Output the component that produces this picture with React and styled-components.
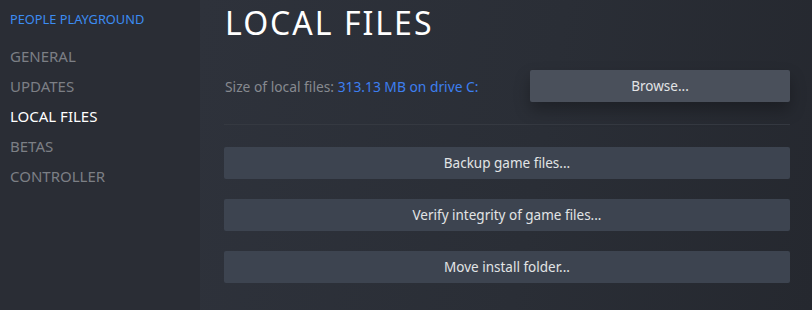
import React from 'react';
import styled, { createGlobalStyle } from 'styled-components';

const GlobalStyle = createGlobalStyle`
  html, body {
    margin: 0;
    padding: 0;
    background: #2a2d35;
  }
  body {
    font-family: "Noto Sans", "DejaVu Sans", sans-serif;
  }
`;

const Page = styled.div`
  display: flex;
  width: 812px;
  height: 310px;
  overflow: hidden;
`;

const Sidebar = styled.nav`
  width: 200px;
  flex-shrink: 0;
  background: #2a2d35;
  padding: 11px 0 0 10px;
  box-sizing: border-box;
`;

const GameTitle = styled.div`
  font-size: 12.8px;
  line-height: 16px;
  color: #3c8cf2;
  margin-bottom: 14px;
`;

const NavItem = styled.div`
  font-size: 15px;
  line-height: 30px;
  color: ${(p) => (p.$active ? '#ffffff' : '#7c7f85')};
  cursor: pointer;
`;

const Main = styled.main`
  flex: 1;
  padding: 0 22px 0 24px;
  background: linear-gradient(100deg, #2e323b 0%, #2a2e36 55%, #25282f 100%);
  display: flex;
  flex-direction: column;
`;

const Title = styled.h1`
  margin: 0 0 0 1px;
  font-size: 32px;
  font-weight: 400;
  line-height: 46px;
  letter-spacing: 2px;
  color: #ffffff;
  height: 46px;
`;

const SizeRow = styled.div`
  display: flex;
  align-items: center;
  justify-content: space-between;
  margin-top: 24px;
  padding-bottom: 22px;
  border-bottom: 1px solid #353941;
`;

const SizeText = styled.div`
  font-size: 13.8px;
  color: #878a90;
  padding-left: 1px;
`;

const SizeValue = styled.span`
  color: #3d7ff0;
`;

const ActionButton = styled.button`
  font-family: inherit;
  font-size: 13.5px;
  color: #e2e4e6;
  height: 32px;
  border: none;
  border-radius: 2px;
  background: ${(p) => (p.$primary ? '#4a505b' : '#3d4450')};
  box-shadow: ${(p) => (p.$primary ? '0 8px 16px rgba(0, 0, 0, 0.28)' : 'none')};
  width: ${(p) => (p.$primary ? '260px' : '100%')};
  cursor: pointer;
  padding: 0;
`;

const ButtonList = styled.div`
  display: flex;
  flex-direction: column;
  gap: 20px;
  margin-top: 22px;
`;

const navItems = ['GENERAL', 'UPDATES', 'LOCAL FILES', 'BETAS', 'CONTROLLER'];

export default function App() {
  return (
    <Page>
      <GlobalStyle />
      <Sidebar>
        <GameTitle>PEOPLE PLAYGROUND</GameTitle>
        {navItems.map((item) => (
          <NavItem key={item} $active={item === 'LOCAL FILES'}>
            {item}
          </NavItem>
        ))}
      </Sidebar>
      <Main>
        <Title>LOCAL FILES</Title>
        <SizeRow>
          <SizeText>
            Size of local files: <SizeValue>313.13 MB on drive C:</SizeValue>
          </SizeText>
          <ActionButton $primary>Browse...</ActionButton>
        </SizeRow>
        <ButtonList>
          <ActionButton>Backup game files...</ActionButton>
          <ActionButton>Verify integrity of game files...</ActionButton>
          <ActionButton>Move install folder...</ActionButton>
        </ButtonList>
      </Main>
    </Page>
  );
}
